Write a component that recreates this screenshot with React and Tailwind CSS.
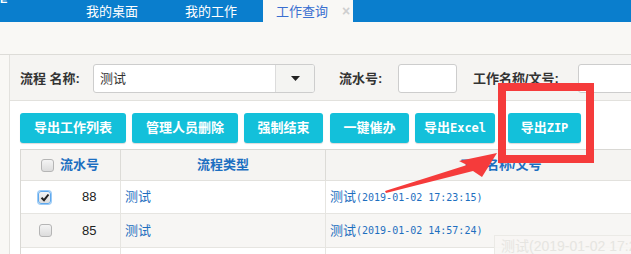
import React from "react";

const cjk = { fontFamily: '"Liberation Sans","Noto Sans CJK SC",sans-serif' };
const mono = { fontFamily: '"DejaVu Sans Mono","Liberation Mono","Noto Sans CJK SC",monospace' };

function Btn({ children, w, ml }) {
  return (
    <div
      className={`h-[30px] ${w} ${ml} shrink-0 rounded-[3px] bg-[#13c0da] flex items-center justify-center text-white text-[13px] font-bold whitespace-nowrap shadow-[0_1px_1px_rgba(0,0,0,0.15)]`}
    >
      {children}
    </div>
  );
}

function Check({ checked }) {
  return (
    <div
      className={`w-[13px] h-[13px] rounded-[3px] border ${checked ? "border-[#5fa9ee] shadow-[0_0_0_1px_#9ccbf6]" : "border-[#b5b5b5]"} bg-[linear-gradient(#f4f4f4,#dcdcdc)] flex items-center justify-center`}
    >
      {checked && (
        <svg width="10" height="9" viewBox="0 0 10 9">
          <path d="M1.5 4.8 L4 7.2 L8.5 1.5" stroke="#222" strokeWidth="2" fill="none" />
        </svg>
      )}
    </div>
  );
}

export default function App() {
  return (
    <div className="relative w-[631px] h-[254px] overflow-hidden bg-white" style={cjk}>
      {/* top bar */}
      <div className="h-[22px] bg-[#0a7ecd] flex items-stretch text-[13px] text-white relative whitespace-nowrap">
        <div className="absolute left-0 top-[-6px] text-[11px] font-bold leading-none">E°</div>
        <div className="w-[86px] shrink-0" />
        <div className="flex items-center leading-none">我的桌面</div>
        <div className="w-[47px] shrink-0" />
        <div className="flex items-center leading-none">我的工作</div>
        <div className="w-[26px] shrink-0" />
        <div className="w-[90px] shrink-0 bg-[#f9f8f5] flex items-center pl-[13px] text-[#3a6fd0] leading-none">
          工作查询
          <span className="ml-[14px] text-[#cfcfcf] text-[14px] font-bold">×</span>
        </div>
      </div>
      {/* second bar */}
      <div className="h-[33px] bg-[#f9f8f5] border-b border-[#dddcd8]" />
      <div className="flex">
        <div className="w-[10px] shrink-0 bg-[#f9f8f5] border-r border-[#e3e2de] h-[200px]" />
        <div className="flex-1 min-w-0">
          {/* filter */}
          <div className="h-[46px] bg-[#f5f4f2] border-b border-[#e2e1dd] flex items-center text-[13px] font-bold text-[#333] pl-[10px] pt-[2px] whitespace-nowrap">
            <span className="w-[73px] shrink-0">流程 名称:</span>
            <div className="w-[222px] h-[29px] shrink-0 rounded-[3px] border border-[#cdcdcd] bg-white flex overflow-hidden">
              <div className="flex-1 flex items-center pl-[6px] font-normal text-[#333]">测试</div>
              <div className="w-[39px] border-l border-[#dcdcdc] bg-[#f4f4f2] flex items-center justify-center">
                <svg width="9" height="5" viewBox="0 0 9 5"><path d="M0 0 H9 L4.5 5 Z" fill="#222" /></svg>
              </div>
            </div>
            <span className="ml-[24px] w-[59px] shrink-0">流水号:</span>
            <div className="w-[59px] h-[29px] shrink-0 rounded-[3px] border border-[#cdcdcd] bg-white" />
            <span className="ml-[16px] w-[105px] shrink-0">工作名称/文号:</span>
            <div className="w-[80px] h-[29px] shrink-0 rounded-l-[3px] border border-[#cdcdcd] bg-white" />
          </div>
          {/* buttons */}
          <div className="flex pt-[12px] pl-[10px] h-[48px]">
            <Btn w="w-[106px]" ml="">导出工作列表</Btn>
            <Btn w="w-[106px]" ml="ml-[6px]">管理人员删除</Btn>
            <Btn w="w-[79px]" ml="ml-[6px]">强制结束</Btn>
            <Btn w="w-[79px]" ml="ml-[7px]">一键催办</Btn>
            <Btn w="w-[80px]" ml="ml-[6px]">
              导出<span style={mono} className="text-[12px]">Excel</span>
            </Btn>
            <Btn w="w-[73px]" ml="ml-[13px]">
              导出<span style={mono} className="text-[12px]">ZIP</span>
            </Btn>
          </div>
          {/* table */}
          <div className="ml-[10px] border-t border-l border-[#d9d8d4] text-[13px] whitespace-nowrap">
            <div className="flex h-[31px] bg-[#f5f4f2] border-b border-[#e2e1dd] font-bold text-[#1c6fc1] text-[13px]">
              <div className="w-[100px] shrink-0 border-r border-[#dcdbd7] flex items-center pl-[20px] gap-[6px]">
                <Check />
                <span>流水号</span>
              </div>
              <div className="w-[205px] shrink-0 border-r border-[#dcdbd7] flex items-center justify-center">流程类型</div>
              <div className="flex-1 flex items-center pl-[134px]">工作名称/文号</div>
            </div>
            <div className="flex h-[33px] bg-white border-b border-[#e6e5e1]">
              <div className="w-[100px] shrink-0 border-r border-[#e6e5e1] flex items-center pl-[17px]">
                <Check checked />
                <span className="ml-[31px] text-[#222]">88</span>
              </div>
              <div className="w-[205px] shrink-0 border-r border-[#e6e5e1] flex items-center pl-[4px] text-[#1e6fbf]">测试</div>
              <div className="flex-1 flex items-center pl-[4px] text-[#1e6fbf]">
                测试<span style={mono} className="text-[10px]">(2019-01-02 17:23:15)</span>
              </div>
            </div>
            <div className="flex h-[34px] bg-[#f7f6f4] border-b border-[#e6e5e1]">
              <div className="w-[100px] shrink-0 border-r border-[#e6e5e1] flex items-center pl-[17px]">
                <div className="ml-[1px]"><Check /></div>
                <span className="ml-[30px] text-[#222]">85</span>
              </div>
              <div className="w-[205px] shrink-0 border-r border-[#e6e5e1] flex items-center pl-[4px] text-[#1e6fbf]">测试</div>
              <div className="flex-1 flex items-center pl-[4px] text-[#1e6fbf]">
                测试<span style={mono} className="text-[10px]">(2019-01-02 14:57:24)</span>
              </div>
            </div>
            <div className="flex h-[20px] bg-white">
              <div className="w-[100px] shrink-0 border-r border-[#e6e5e1]" />
              <div className="w-[205px] shrink-0 border-r border-[#e6e5e1]" />
            </div>
          </div>
        </div>
      </div>

      {/* faded tooltip */}
      <div className="absolute left-[494px] top-[235px] w-[160px] h-[24px] border border-[#ebeae6] bg-[#f7f6f4]/90 text-[14px] text-[#e6e5e1] pl-[6px] leading-[20px] whitespace-nowrap">
        测试(2019-01-02 17:23:15)
      </div>

      {/* red annotation box */}
      <div className="absolute left-[498px] top-[83px] w-[96px] h-[80px] border-[8px] border-[#f53b3b]" />
      {/* red arrow */}
      <svg className="absolute left-0 top-0" width="631" height="254" viewBox="0 0 631 254">
        <polygon
          points="385,191 467,165 459,161 497,153 482,177 473,171 386,193"
          fill="#f53b3b"
        />
      </svg>
    </div>
  );
}
